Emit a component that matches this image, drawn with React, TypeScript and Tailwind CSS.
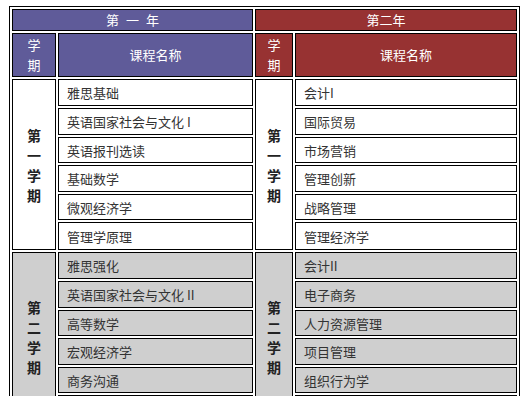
const year1a = ["雅思基础", "英语国家社会与文化 I", "英语报刊选读", "基础数学", "微观经济学", "管理学原理"];
const year2a = ["会计I", "国际贸易", "市场营销", "管理创新", "战略管理", "管理经济学"];
const year1b = ["雅思强化", "英语国家社会与文化 II", "高等数学", "宏观经济学", "商务沟通", ""];
const year2b = ["会计II", "电子商务", "人力资源管理", "项目管理", "组织行为学", ""];

const font = { fontFamily: '"Noto Sans CJK SC", "Noto Sans", sans-serif' };

function Term({ label, row, col, gray }: { label: string[]; row: string; col: string; gray?: boolean }) {
  return (
    <div
      className={`${row} ${col} border border-black flex flex-col items-center justify-center text-[14px] leading-[20px] font-bold text-[#222] ${gray ? "bg-[#cfcfcf]" : "bg-white"}`}
    >
      {label.map((c, i) => (
        <span key={i}>{c}</span>
      ))}
    </div>
  );
}

function Course({ name, gray }: { name: string; gray?: boolean }) {
  return (
    <div
      className={`border border-black flex items-center pl-2 pt-px text-[13px] text-[#333] whitespace-nowrap ${gray ? "bg-[#cfcfcf]" : "bg-white"}`}
    >
      {name}
    </div>
  );
}

export default function App() {
  return (
    <div className="w-[530px] h-[396px] bg-white overflow-hidden pt-[6px] pl-[9px]" style={font}>
      <div className="w-[511px] border border-black p-[2px]">
        <div className="grid grid-cols-[44px_195px_38px_222px] grid-rows-[22px_44px_27px_27px_26px_27px_26px_28px_27px_27px_26px_27px_26px_27px] gap-[2px]">
          <div className="col-span-2 border border-black bg-[#5f5b99] text-white text-[13px] flex items-center justify-center gap-[7px]">
            <span>第</span>
            <span>一</span>
            <span>年</span>
          </div>
          <div className="col-span-2 border border-black bg-[#973232] text-white text-[13px] flex items-center justify-center">
            第二年
          </div>

          <div className="border border-black bg-[#5f5b99] text-white text-[13px] leading-[20px] flex flex-col items-center justify-center">
            <span>学</span>
            <span>期</span>
          </div>
          <div className="border border-black bg-[#5f5b99] text-white text-[13px] flex items-center justify-center">
            课程名称
          </div>
          <div className="border border-black bg-[#973232] text-white text-[13px] leading-[20px] flex flex-col items-center justify-center">
            <span>学</span>
            <span>期</span>
          </div>
          <div className="border border-black bg-[#973232] text-white text-[13px] flex items-center justify-center">
            课程名称
          </div>

          <Term label={["第", "一", "学", "期"]} row="row-start-3 row-span-6" col="col-start-1" />
          <div className="col-start-2 row-start-3 row-span-6 grid grid-rows-subgrid">
            {year1a.map((c, i) => (
              <Course key={i} name={c} />
            ))}
          </div>
          <Term label={["第", "一", "学", "期"]} row="row-start-3 row-span-6" col="col-start-3" />
          <div className="col-start-4 row-start-3 row-span-6 grid grid-rows-subgrid">
            {year2a.map((c, i) => (
              <Course key={i} name={c} />
            ))}
          </div>

          <Term label={["第", "二", "学", "期"]} row="row-start-9 row-span-6" col="col-start-1" gray />
          <div className="col-start-2 row-start-9 row-span-6 grid grid-rows-subgrid">
            {year1b.map((c, i) => (
              <Course key={i} name={c} gray />
            ))}
          </div>
          <Term label={["第", "二", "学", "期"]} row="row-start-9 row-span-6" col="col-start-3" gray />
          <div className="col-start-4 row-start-9 row-span-6 grid grid-rows-subgrid">
            {year2b.map((c, i) => (
              <Course key={i} name={c} gray />
            ))}
          </div>
        </div>
      </div>
    </div>
  );
}
